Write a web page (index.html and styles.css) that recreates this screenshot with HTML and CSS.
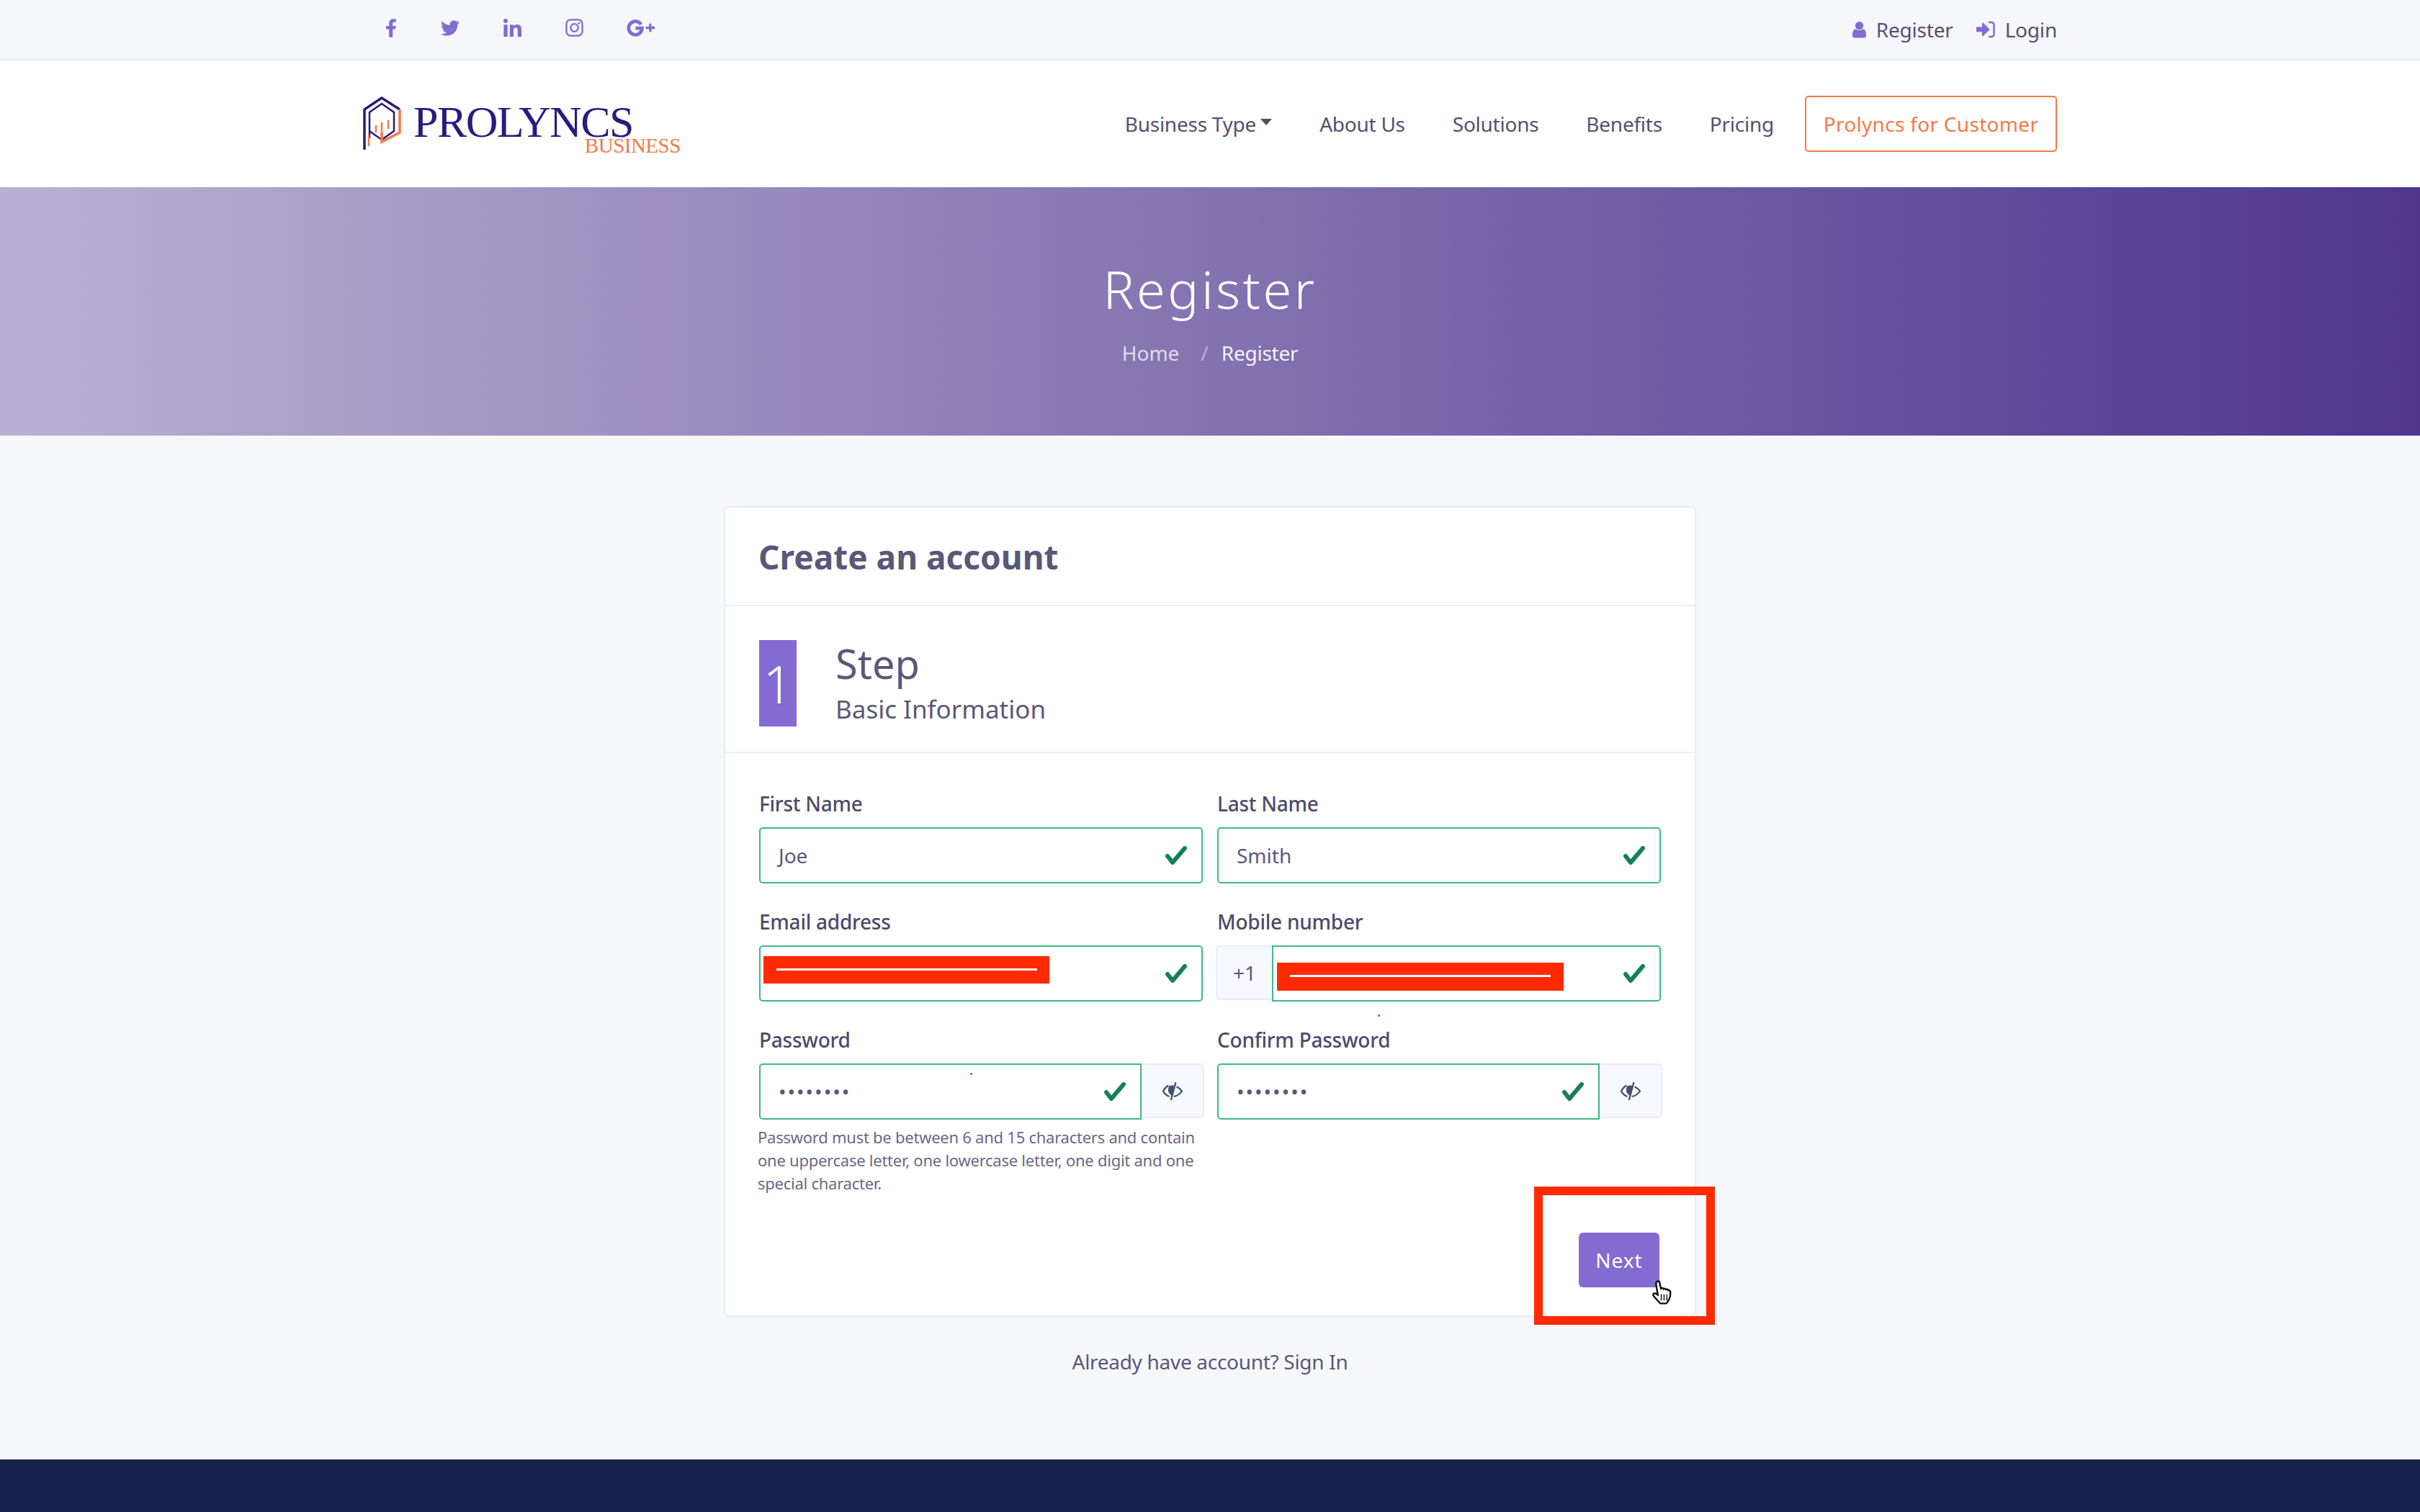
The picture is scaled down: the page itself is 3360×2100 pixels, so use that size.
FILE: index.html
```html
<!DOCTYPE html>
<html lang="en">
<head>
<meta charset="utf-8">
<title>Register</title>
<link rel="stylesheet" href="styles.css">
</head>
<body>
<div class="page">
  <div class="topbar">
    <div class="wrap topbar-in">
      <div class="socials">
        <svg class="soc s-f" viewBox="0 0 320 512"><path d="M279.14 288l14.22-92.66h-88.91v-60.13c0-25.35 12.42-50.06 52.24-50.06h40.42V6.26S260.43 0 225.36 0c-73.22 0-121.08 44.38-121.08 124.72v70.62H22.89V288h81.39v224h100.17V288z"/></svg>
        <svg class="soc s-t" viewBox="0 0 512 512"><path d="M459.37 151.716c.325 4.548.325 9.097.325 13.645 0 138.72-105.583 298.558-298.558 298.558-59.452 0-114.68-17.219-161.137-47.106 8.447.974 16.568 1.299 25.34 1.299 49.055 0 94.213-16.568 130.274-44.832-46.132-.975-84.792-31.188-98.112-72.772 6.498.974 12.995 1.624 19.818 1.624 9.421 0 18.843-1.3 27.614-3.573-48.081-9.747-84.143-51.98-84.143-102.985v-1.299c13.969 7.797 30.214 12.67 47.431 13.319-28.264-18.843-46.781-51.005-46.781-87.391 0-19.492 5.197-37.36 14.294-52.954 51.655 63.675 129.3 105.258 216.365 109.807-1.624-7.797-2.599-15.918-2.599-24.04 0-57.828 46.782-104.934 104.934-104.934 30.213 0 57.502 12.67 76.67 33.137 23.715-4.548 46.456-13.32 66.599-25.34-7.798 24.366-24.366 44.833-46.132 57.827 21.117-2.273 41.584-8.122 60.426-16.243-14.292 20.791-32.161 39.308-52.628 54.253z"/></svg>
        <svg class="soc s-l" viewBox="0 0 448 448"><path d="M100.28 448H7.4V148.9h92.88zM53.79 108.1C24.09 108.1 0 83.5 0 53.8a53.79 53.79 0 0 1 107.58 0c0 29.7-24.1 54.3-53.79 54.3zM447.9 448h-92.68V302.4c0-34.7-.7-79.2-48.29-79.2-48.29 0-55.69 37.7-55.69 76.7V448h-92.78V148.9h89.08v40.8h1.3c12.4-23.5 42.69-48.3 87.88-48.3 94 0 111.28 61.9 111.28 142.3V448z"/></svg>
        <svg class="soc s-i" viewBox="0 0 26 26"><rect class="ln" x="1.5" y="1.5" width="23" height="23" rx="6"/><circle class="ln" cx="13" cy="13" r="5.5"/><circle cx="19.6" cy="6.4" r="1.5"/></svg>
        <svg class="soc s-g" viewBox="0 0 42 26"><path class="ln thick" d="M21 8.2A9.8 9.8 0 1 0 22.6 13.6H13"/><path class="ln plus" d="M28 13h13M34.5 7v12"/></svg>
      </div>
      <div class="auth">
        <a class="auth-link"><svg class="auth-ic" viewBox="0 0 20 24"><circle cx="10" cy="6.5" r="6"/><path d="M0 21c0-7 2-9.500 5-9.500 1.500 1.200 3.200 1.800 5 1.800s3.500-.6 5-1.800c3 0 5 2.500 5 9.500 0 2-1.500 3-3 3H3c-1.500 0-3-1-3-3z"/></svg>Register</a>
        <a class="auth-link"><svg class="auth-ic wide" viewBox="0 0 26 24"><path d="M0 8.500h8V3.500c0-.8 1-1.200 1.600-.6l8.600 8.300c.4.400.4 1 0 1.400l-8.600 8.300c-.6.600-1.600.2-1.600-.6v-5H0z"/><path class="ln" d="M17 2h4c2 0 3.500 1.500 3.500 3.500v13c0 2-1.500 3.500-3.500 3.500h-4"/></svg>Login</a>
      </div>
    </div>
  </div>

  <header class="nav">
    <div class="wrap nav-in">
      <div class="logo">
        <svg class="logo-mark" viewBox="0 0 53 75">
          <path class="m-blue" d="M2 74V18L26 2l25 16"/>
          <path class="m-blue thin" d="M9 58V22L26 10l17 12v26L26 60 9 48"/>
          <path class="m-orange" d="M51 18v32L26 63V50"/>
          <path class="m-orange thin" d="M8 53v16M18 40v10M26 36v18M35 33v12"/>
        </svg>
        <div class="logo-text">
          <span class="logo-main">PROLYNCS</span>
          <span class="logo-sub">BUSINESS</span>
        </div>
      </div>
      <nav class="menu">
        <a class="menu-link">Business Type<span class="caret"></span></a>
        <a class="menu-link">About Us</a>
        <a class="menu-link">Solutions</a>
        <a class="menu-link">Benefits</a>
        <a class="menu-link">Pricing</a>
        <a class="menu-btn">Prolyncs for Customer</a>
      </nav>
    </div>
  </header>

  <section class="hero">
    <h1 class="hero-title">Register</h1>
    <div class="crumbs"><span class="crumb-home">Home</span><span class="crumb-sep">/</span><span class="crumb-now">Register</span></div>
  </section>

  <main class="main">
    <div class="card">
      <div class="card-head"><h2 class="card-title">Create an account</h2></div>
      <div class="step">
        <div class="step-num">1</div>
        <div class="step-text">
          <div class="step-title">Step</div>
          <div class="step-sub">Basic Information</div>
        </div>
      </div>
      <form class="form">
        <div class="field">
          <label class="label">First Name</label>
          <div class="input valid"><span class="val">Joe</span><svg class="check" viewBox="0 0 30 26"><path d="M3 14l7 9L27 3"/></svg></div>
        </div>
        <div class="field">
          <label class="label">Last Name</label>
          <div class="input valid"><span class="val">Smith</span><svg class="check" viewBox="0 0 30 26"><path d="M3 14l7 9L27 3"/></svg></div>
        </div>
        <div class="field">
          <label class="label">Email address</label>
          <div class="input valid"><svg class="check" viewBox="0 0 30 26"><path d="M3 14l7 9L27 3"/></svg>
            <div class="redact r-mail"><span class="redact-line"></span></div>
          </div>
        </div>
        <div class="field">
          <label class="label">Mobile number</label>
          <div class="group group-phone">
            <div class="addon addon-l">+1</div>
            <div class="input valid square-l"><svg class="check" viewBox="0 0 30 26"><path d="M3 14l7 9L27 3"/></svg>
              <div class="redact r-phone"><span class="redact-line"></span></div>
            </div>
          </div>
          <span class="speck s-two"></span>
        </div>
        <div class="field">
          <label class="label">Password</label>
          <div class="group">
            <div class="input valid square-r"><span class="val dots">••••••••</span><svg class="check" viewBox="0 0 30 26"><path d="M3 14l7 9L27 3"/></svg><span class="speck s-one"></span></div>
            <div class="addon addon-r"><svg class="eye" viewBox="0 0 26 24"><path class="eye-l" d="M8 5C5 6.500 3 9 1.500 12c1.500 3 4 5.500 7.500 6.500M18 6.500c3 1.500 5 3.500 6.500 5.500-2 3-5 6-10 6.500"/><path class="eye-f" d="M9 5.500c2-.7 4-.9 6-.5l-3 12.500C8 15 6 11 9 5.500z"/><path class="eye-l" d="M17 1l-6 22"/></svg></div>
          </div>
          <p class="help">Password must be between 6 and 15 characters and contain one uppercase letter, one lowercase letter, one digit and one special character.</p>
        </div>
        <div class="field">
          <label class="label">Confirm Password</label>
          <div class="group">
            <div class="input valid square-r"><span class="val dots">••••••••</span><svg class="check" viewBox="0 0 30 26"><path d="M3 14l7 9L27 3"/></svg></div>
            <div class="addon addon-r"><svg class="eye" viewBox="0 0 26 24"><path class="eye-l" d="M8 5C5 6.500 3 9 1.500 12c1.500 3 4 5.500 7.500 6.500M18 6.500c3 1.500 5 3.500 6.500 5.500-2 3-5 6-10 6.500"/><path class="eye-f" d="M9 5.500c2-.7 4-.9 6-.5l-3 12.500C8 15 6 11 9 5.500z"/><path class="eye-l" d="M17 1l-6 22"/></svg></div>
          </div>
        </div>
      </form>
      <div class="actions"><button class="next" type="button">Next</button></div>
      <div class="highlight"></div>
      <svg class="cursor" viewBox="0 0 30 36"><path d="M7 2c1.500-1 3-.5 3.500 1l2 9 1-.5c1.500-.5 2.500 0 3 1 1-.7 2.500-.5 3 .8 1.200-.6 2.500-.2 3.200 1 1.500-.3 3 .5 3.300 2.500.3 4-.5 8-2 11-1 2-2 4-4 5.500H12c-2-1.500-5-5-9-9.500-1.500-1.500-2-3.500-.8-4.500 1.300-1 3-.5 4.800 1.200L8 21 5.500 5C5.300 3.700 6 2.700 7 2z"/><path class="cursor-l" d="M13 20v9M17 20v9M21 20v9"/></svg>
    </div>
    <p class="already">Already have account? <a class="signin">Sign In</a></p>
  </main>

  <footer class="footer"></footer>
</div>
</body>
</html>
```

FILE: styles.css
```css
* { box-sizing: border-box; }
html, body { margin: 0; padding: 0; }
body {
  font-family: "Noto Sans", "Open Sans", sans-serif;
  color: #5a5878;
  background: #f5f7fb;
  font-size: 28px;
}
.page { width: 3360px; height: 2100px; overflow: hidden; display: flex; flex-direction: column; }
.wrap { width: 2360px; margin: 0 auto; }

/* top bar */
.topbar { height: 84px; background: #f5f7fb; border-bottom: 2px solid #e9ebf3; }
.topbar-in { height: 82px; display: flex; justify-content: space-between; align-items: center; }
.socials { display: flex; align-items: center; margin-left: 35px; margin-top: -5px; }
.soc { display: block; fill: #836bd1; }
.soc .ln { fill: none; stroke: #836bd1; stroke-width: 2.400; }
.soc .thick { stroke-width: 5; }
.soc .plus { stroke-width: 3.500; }
.s-f { width: 16px; height: 28px; }
.s-t { width: 26px; height: 26px; margin-left: 61px; }
.s-l { width: 27px; height: 25px; margin-left: 60px; }
.s-i { width: 25px; height: 25px; margin-left: 60px; }
.s-g { width: 40px; height: 25px; margin-left: 60px; }
.auth { display: flex; gap: 32px; margin-right: 4px; }
.auth-link { display: flex; align-items: center; font-size: 28px; letter-spacing: -.2px; color: #54506f; }
.auth-ic { width: 19px; height: 24px; margin-right: 14px; fill: #836bd1; }
.auth-ic.wide { width: 26px; }
.auth-ic .ln { fill: none; stroke: #836bd1; stroke-width: 2.500; }

/* nav */
.nav { height: 176px; background: #fff; }
.nav-in { height: 100%; display: flex; justify-content: space-between; align-items: center; }
.logo { display: flex; align-items: flex-start; margin-left: 4px; margin-top: 2px; }
.logo-mark { width: 53px; height: 75px; display: block; }
.m-blue { fill: none; stroke: #2b1a80; stroke-width: 3.500; }
.m-orange { fill: none; stroke: #f47a45; stroke-width: 3.500; }
.thin { stroke-width: 2.500; }
.logo-text { display: flex; flex-direction: column; align-items: flex-end; margin-left: 17px; margin-top: 12px; font-family: "Liberation Serif", serif; }
.logo-main { font-size: 62px; line-height: 46px; color: #2b1a80; margin-right: 66px; letter-spacing: -1.600px; }
.logo-sub { font-size: 29px; line-height: 20px; color: #f47a45; letter-spacing: -.5px; }
.menu { display: flex; align-items: center; margin-right: 4px; }
.menu-link { font-size: 28px; letter-spacing: -.25px; color: #54506f; margin-right: 66px; display: flex; align-items: center; white-space: nowrap; }
.menu-link:nth-child(5) { margin-right: 43px; }
.caret { width: 0; height: 0; margin-left: 6px; margin-top: -6px; border-left: 8px solid transparent; border-right: 8px solid transparent; border-top: 9px solid #4c4f63; }
.menu-btn { width: 350px; height: 78px; display: flex; align-items: center; justify-content: center; border: 2px solid #f47a45; border-radius: 5px; color: #f47a45; font-size: 28px; letter-spacing: .3px; white-space: nowrap; }

/* hero */
.hero { height: 345px; background: linear-gradient(90deg, #b9b1d3 0%, #4e368f 100%); display: flex; flex-direction: column; align-items: center; color: #fff; }
.hero-title { margin: 96px 0 0; font-size: 72px; line-height: 90px; font-weight: 300; letter-spacing: 3.500px; }
.crumbs { display: flex; font-size: 28px; line-height: 40px; margin-top: 24px; }
.crumb-home { color: rgba(255,255,255,.75); }
.crumb-sep { color: rgba(255,255,255,.45); margin: 0 18px 0 30px; }
.crumb-now { color: #f4f2fa; letter-spacing: -.25px; }

/* card */
.main { flex: 1; display: flex; flex-direction: column; align-items: center; padding-top: 98px; }
.card { position: relative; width: 1350px; height: 1126px; background: #fff; border: 2px solid #e9ecf3; border-radius: 8px; }
.card-head { height: 137px; border-bottom: 2px solid #e9ecf3; padding: 0 46px; display: flex; align-items: center; }
.card-title { margin: 0; font-size: 46px; font-weight: 700; color: #5a5878; }
.step { height: 204px; border-bottom: 2px solid #eeeff3; padding: 47px 47px 0; display: flex; }
.step-num { width: 52px; height: 120px; background: #836bd1; color: #fff; font-size: 72px; font-weight: 300; display: flex; align-items: center; justify-content: center; }
.step-text { margin-left: 54px; }
.step-title { font-size: 56px; line-height: 64px; font-weight: 400; color: #5a5878; }
.step-sub { font-size: 35px; line-height: 48px; margin-top: 8px; color: #5a5878; }

/* form */
.form { display: grid; grid-template-columns: 616px 616px; column-gap: 20px; padding: 52px 47px 0; align-items: start; }
.field { position: relative; height: 164px; }
.label { display: block; font-size: 28px; line-height: 36px; letter-spacing: -.25px; color: #4d4a6b; font-weight: 500; margin-bottom: 15px; }
.group { display: flex; align-items: flex-start; width: 618px; }
.group-phone { margin-left: -2px; }
.input { position: relative; flex: 1; height: 78px; border: 2px solid #3dba82; border-radius: 5px; background: #fff; display: flex; align-items: center; justify-content: space-between; padding: 0 20px 0 25px; }
.val { font-size: 28px; color: #5a5878; }
.dots { letter-spacing: 2px; }
.check { width: 30px; height: 26px; margin-left: auto; fill: none; stroke: #168055; stroke-width: 6; stroke-linecap: round; stroke-linejoin: round; }
.square-l { border-radius: 0 5px 5px 0; }
.square-r { border-radius: 5px 0 0 5px; }
.addon { height: 76px; background: #f6f8fd; border: 2px solid #e9ecf3; display: flex; align-items: center; justify-content: center; color: #5a5878; font-size: 28px; }
.addon-l { width: 78px; border-right: 0; border-radius: 5px 0 0 5px; }
.addon-r { width: 87px; border-left: 0; border-radius: 0 5px 5px 0; }
.eye { width: 30px; height: 27px; }
.eye-l { fill: none; stroke: #42506b; stroke-width: 2; }
.eye-f { fill: #42506b; }
.help { margin: 8px 0 0 -2px; font-size: 22px; line-height: 32px; letter-spacing: -.25px; color: #6a6885; width: 615px; }
.redact { position: absolute; background: #ff2a00; display: flex; align-items: center; justify-content: center; }
.redact-line { display: block; width: 362px; height: 3px; background: #fff; margin-top: -2px; }
.r-mail { left: 4px; top: 13px; width: 397px; height: 38px; }
.r-phone { left: 5px; top: 22px; width: 398px; height: 39px; }
.speck { position: absolute; width: 3px; height: 3px; border-radius: 50%; background: #f02a10; }
.s-one { left: 291px; top: 11px; }
.s-two { left: 223px; top: 147px; }
.actions { position: absolute; right: 49px; top: 1007px; }
.next { display: block; width: 112px; height: 76px; border: 0; border-radius: 6px; background: #836bd1; color: #fff; font: 28px "Noto Sans", sans-serif; letter-spacing: 1px; }
.highlight { position: absolute; left: 1123px; top: 943px; width: 251px; height: 192px; border: 12px solid #ff2a00; }
.cursor { position: absolute; left: 1286px; top: 1073px; width: 31px; height: 35px; fill: #fff; stroke: #111; stroke-width: 2.500; }
.cursor-l { stroke-width: 1.500; fill: none; }
.already { margin: 44px 0 0; font-size: 28px; line-height: 36px; color: #5a5878; letter-spacing: -.3px; }
.signin { color: #5a5878; }

/* footer */
.footer { height: 73px; background: #17234e; }
```
